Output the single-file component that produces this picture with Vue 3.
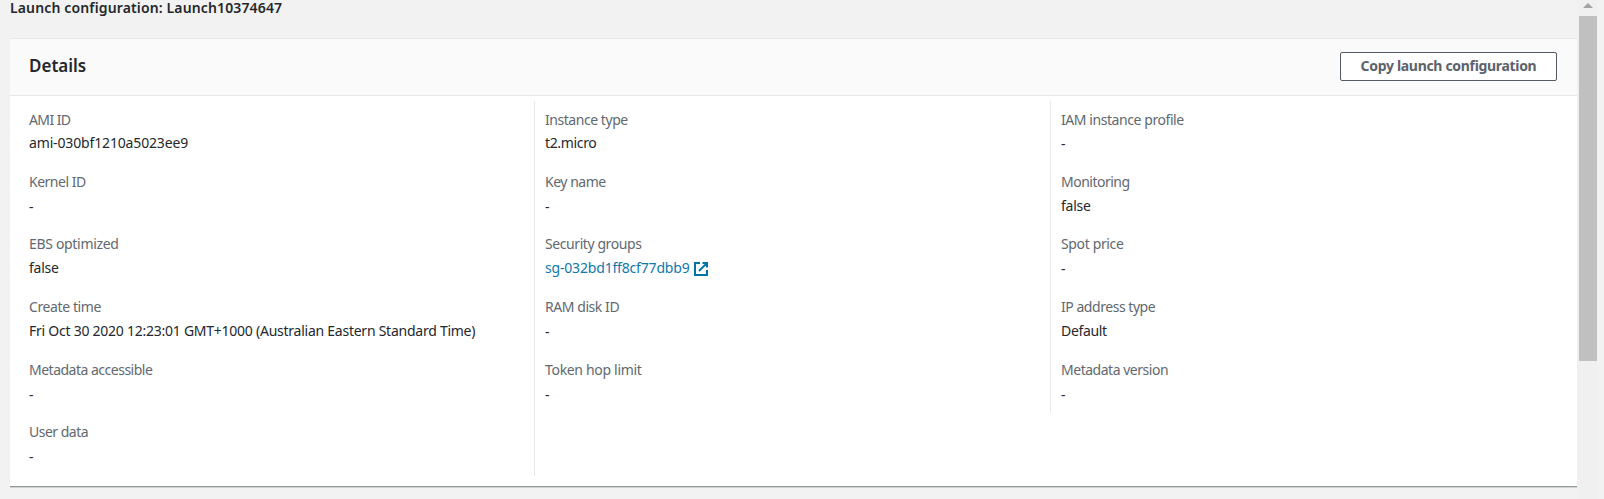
<script setup>
// Each field: label, value, label tracking, value tracking (px)
const columns = [
  [
    ['AMI ID', 'ami-030bf1210a5023ee9', -0.6, -0.15],
    ['Kernel ID', '-', -0.5, 0],
    ['EBS optimized', 'false', -0.32, -0.25],
    ['Create time', 'Fri Oct 30 2020 12:23:01 GMT+1000 (Australian Eastern Standard Time)', -0.4, -0.25],
    ['Metadata accessible', '-', -0.5, 0],
    ['User data', '-', -0.5, 0],
  ],
  [
    ['Instance type', 't2.micro', -0.45, -0.35],
    ['Key name', '-', -0.48, 0],
    ['Security groups', 'sg-032bd1ff8cf77dbb9', -0.42, -0.18],
    ['RAM disk ID', '-', -0.44, 0],
    ['Token hop limit', '-', -0.32, 0],
  ],
  [
    ['IAM instance profile', '-', -0.43, 0],
    ['Monitoring', 'false', -0.5, -0.25],
    ['Spot price', '-', -0.36, 0],
    ['IP address type', 'Default', -0.46, -0.34],
    ['Metadata version', '-', -0.48, 0],
  ],
]
</script>

<template>
  <div class="page">
    <main class="content">
      <h2 class="title">Launch configuration: Launch10374647</h2>
      <section class="card">
        <header class="card-head">
          <h3>Details</h3>
          <button type="button">Copy launch configuration</button>
        </header>
        <div class="columns">
          <div v-for="(col, c) in columns" :key="c" class="column">
            <div v-for="[label, value, lt, vt] in col" :key="label" class="field">
              <div class="label" :style="{ letterSpacing: lt + 'px' }">{{ label }}</div>
              <div class="value" :class="{ empty: value === '-' }">
                <a v-if="value.startsWith('sg-')" class="link">
                  <span :style="{ letterSpacing: vt + 'px' }">{{ value }}</span>
                  <svg width="14" height="14" viewBox="0 0 14 14" fill="none" stroke="currentColor" stroke-width="2">
                    <path d="M6 1H1v12h12V8M8.5 1H13v4.5M12.6 1.4L5 9" />
                  </svg>
                </a>
                <span v-else :style="{ letterSpacing: vt + 'px' }">{{ value }}</span>
              </div>
            </div>
          </div>
        </div>
      </section>
    </main>
    <div class="scrollbar">
      <svg class="arrow" width="18" height="16" viewBox="0 0 18 16"><path d="M4 8L9 3L14 8Z" fill="#a3a3a3" /></svg>
      <div class="thumb"></div>
    </div>
  </div>
</template>

<style>
body { margin: 0; overflow: hidden; }
</style>

<style scoped>
.page {
  display: flex;
  height: 499px;
  background: #f2f2f2;
  overflow: hidden;
  font: 14px/22px "Noto Sans", "Open Sans", sans-serif;
  color: #24272c;
}
.content { width: 1577px; padding-left: 10px; box-sizing: border-box; flex: none; }
.title {
  margin: 0;
  height: 38px;
  font-size: 14px;
  font-weight: 600;
  line-height: 15px;
  letter-spacing: 0.14px;
  white-space: nowrap;
}
.card {
  height: 449px;
  box-sizing: border-box;
  background: #fff;
  border-top: 1px solid #eaeaea;
  border-bottom: 1px solid #929898;
  box-shadow: 0 1px 0 #cfd2d2;
}
.card-head {
  display: flex;
  align-items: center;
  justify-content: space-between;
  height: 57px;
  box-sizing: border-box;
  padding: 0 20px 2px 19px;
  background: #fafafa;
  border-bottom: 1px solid #e8e8e8;
}
h3 { margin: 0; font-size: 17px; font-weight: 600; line-height: 22px; }
button {
  width: 217px;
  height: 29px;
  padding: 0;
  border: 1px solid #545b64;
  border-radius: 2px;
  background: #fff;
  color: #5c626b;
  font: bold 14px/20px "Noto Sans", sans-serif;
  letter-spacing: -0.32px;
}
.columns { display: flex; align-items: flex-start; padding-top: 5px; }
.column { width: 516px; box-sizing: border-box; padding: 8px 0 0 10px; }
.column:first-child { width: 524px; padding-left: 19px; }
.column + .column { border-left: 1px solid #e8eaea; }
.column:nth-child(2) { height: 375px; }
.column:nth-child(3) { height: 312px; }
.field { height: 62px; white-space: nowrap; }
.field:nth-child(3), .field:nth-child(4) { height: 63px; }
.label { color: #62686f; }
.value { padding-top: 2px; }
.value.empty { padding-top: 3px; }
.field:first-child .value { padding-top: 1px; }
.field:first-child .value.empty { padding-top: 2px; }
.link { display: inline-flex; align-items: center; gap: 4px; color: #1078ab; }
.link svg { margin-top: 1px; color: #0073a8; }
.scrollbar { width: 20px; flex: none; background: #f0f0f0; padding-left: 2px; box-sizing: border-box; }
.arrow { display: block; }
.thumb { width: 18px; height: 345px; background: #c0c0c0; }
</style>
